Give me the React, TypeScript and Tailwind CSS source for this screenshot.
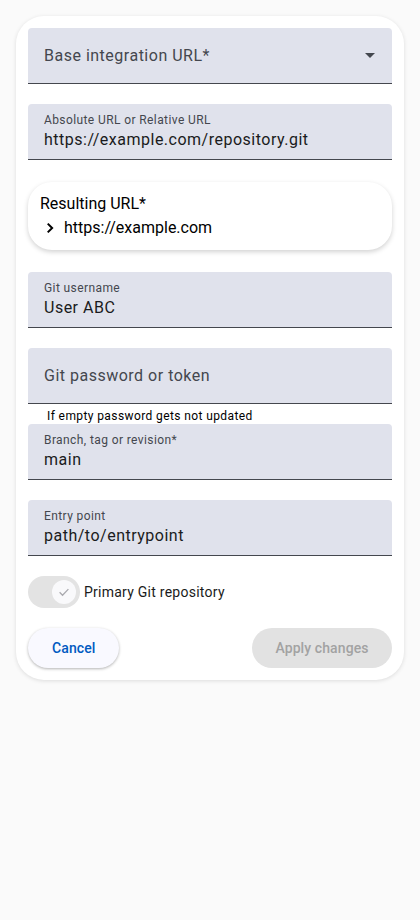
import React from "react";

function FilledField({ label, value }: { label: string; value?: string }) {
  if (value === undefined) {
    return (
      <div className="h-14 rounded-t-[4px] bg-[#e0e2ec] border-b border-[#44474e] flex items-center px-4">
        <span className="text-[16px] text-[#44474e] tracking-[0.5px]">{label}</span>
      </div>
    );
  }
  return (
    <div className="h-14 rounded-t-[4px] bg-[#e0e2ec] border-b border-[#44474e] flex flex-col justify-center px-4">
      <span className="text-[12px] leading-4 text-[#44474e] tracking-[0.4px]">{label}</span>
      <span className="text-[16px] leading-6 text-[#1a1b20] tracking-[0.5px]">{value}</span>
    </div>
  );
}

export default function App() {
  return (
    <div
      className="min-h-[920px] bg-[#fafafa] p-4"
      style={{ fontFamily: "Roboto, 'Liberation Sans', sans-serif" }}
    >
      <div className="bg-white rounded-[28px] shadow-[0_1px_4px_rgba(0,0,0,0.12)] px-3 pt-3 pb-3">
        <div className="h-14 rounded-t-[4px] bg-[#e0e2ec] border-b border-[#44474e] flex items-center justify-between pl-4 pr-4">
          <span className="text-[16px] text-[#44474e] tracking-[0.5px]">Base integration URL*</span>
          <svg width="10" height="5" viewBox="0 0 10 5" className="mr-[1px]">
            <path d="M0 0 L10 0 L5 5 Z" fill="#44474e" />
          </svg>
        </div>

        <div className="mt-5">
          <FilledField label="Absolute URL or Relative URL" value="https://example.com/repository.git" />
        </div>

        <div className="mt-[22px] h-[68px] rounded-[24px] bg-white shadow-[0_2px_5px_rgba(0,0,0,0.18)] flex flex-col justify-center px-3">
          <span className="text-[16px] leading-6 text-black">Resulting URL*</span>
          <div className="flex items-center text-[16px] leading-6 text-black">
            <svg width="16" height="16" viewBox="0 0 24 24" className="ml-[2px] mr-[6px]">
              <path d="M8.6 5.4 L15.2 12 L8.6 18.6" stroke="#000" strokeWidth="3" fill="none" />
            </svg>
            <span>https://example.com</span>
          </div>
        </div>

        <div className="mt-[22px]">
          <FilledField label="Git username" value="User ABC" />
        </div>

        <div className="mt-5">
          <FilledField label="Git password or token" />
        </div>
        <div className="h-5 flex items-center pt-[3px] pl-[19px] text-[12px] text-black tracking-[0.4px]">
          If empty password gets not updated
        </div>

        <FilledField label="Branch, tag or revision*" value="main" />

        <div className="mt-5">
          <FilledField label="Entry point" value="path/to/entrypoint" />
        </div>

        <div className="mt-5 flex items-center gap-1">
          <div className="w-[52px] h-8 rounded-full bg-[#e3e3e3] flex items-center justify-end pr-1">
            <div className="w-6 h-6 rounded-full bg-[#f9f9fb] flex items-center justify-center">
              <svg width="14" height="14" viewBox="0 0 24 24">
                <path d="M4.5 12.5 L9.5 17.5 L19.5 7" stroke="#a9a9ae" strokeWidth="2.2" fill="none" />
              </svg>
            </div>
          </div>
          <span className="text-[14px] text-[#1a1b20] tracking-[0.25px]">Primary Git repository</span>
        </div>

        <div className="mt-5 flex items-center justify-between">
          <button className="h-10 px-6 rounded-full bg-[#f9f9ff] shadow-[0_1px_3px_rgba(0,0,0,0.3)] text-[14px] font-medium text-[#005ac1] tracking-[0.1px]">
            Cancel
          </button>
          <button className="h-10 w-[140px] rounded-full bg-[#e2e2e2] text-[14px] font-medium text-[#a2a2a2] tracking-[0.1px]">
            Apply changes
          </button>
        </div>
      </div>
    </div>
  );
}
